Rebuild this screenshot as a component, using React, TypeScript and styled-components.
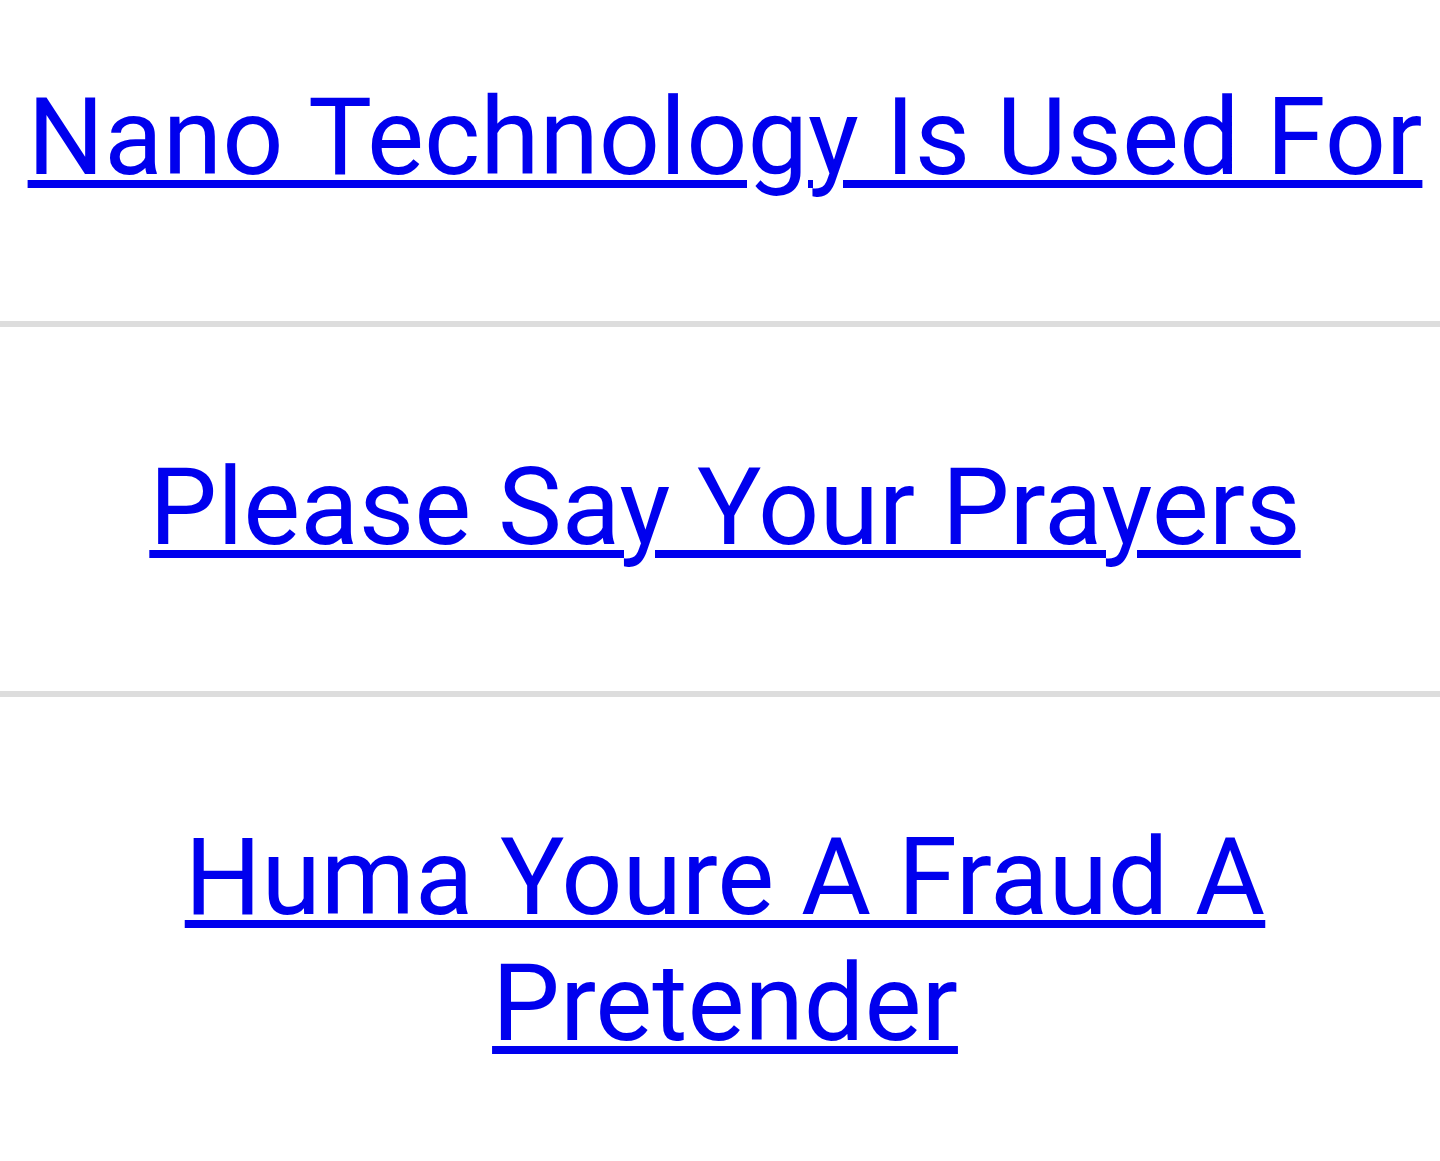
import React from "react";
import styled, { createGlobalStyle } from "styled-components";

const GlobalStyle = createGlobalStyle`
  html, body {
    margin: 0;
    padding: 0;
    background: #ffffff;
  }
  body {
    font-family: Roboto, "Liberation Sans", Arial, sans-serif;
  }
`;

const links = [
  "Nano Technology Is Used For",
  "Please Say Your Prayers",
  "Huma Youre A Fraud A Pretender",
];

const List = styled.div`
  display: flex;
  flex-direction: column;
`;

const Item = styled.div<{ $first?: boolean }>`
  padding: ${(p) => (p.$first ? "74px" : "117px")} 8px 121px 18px;
  text-align: center;
  border-top: ${(p) => (p.$first ? "none" : "6px solid #dddddd")};
`;

const Title = styled.a`
  font-size: 107.5px;
  line-height: normal;
  color: #0000ee;
  text-decoration: underline;
  text-decoration-thickness: 8px;
  text-underline-offset: 6px;
`;

export default function App() {
  return (
    <>
      <GlobalStyle />
      <List>
        {links.map((text, i) => (
          <Item key={text} $first={i === 0}>
            <Title href="#">{text}</Title>
          </Item>
        ))}
      </List>
    </>
  );
}
